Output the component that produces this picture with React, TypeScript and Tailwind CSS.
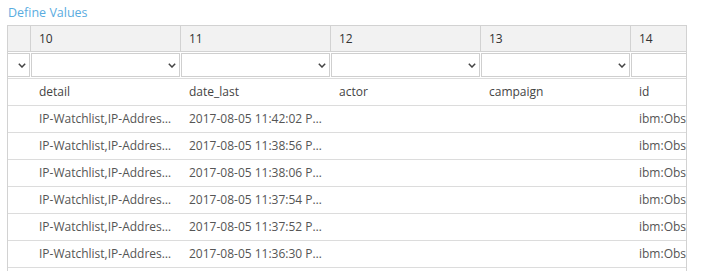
const cols = ["10", "11", "12", "13", "14"];
const names = ["detail", "date_last", "actor", "campaign", "id"];
const times = ["11:42:02", "11:38:56", "11:38:06", "11:37:54", "11:37:52", "11:36:30", "11:35:48"];

function Chevron() {
    return (
        <svg width="8" height="5" viewBox="0 0 8 5" className="absolute right-[3px] top-[9px]">
            <path d="M0.8 0.8 L4 4 L7.2 0.8" fill="none" stroke="#444" strokeWidth="1.5" />
        </svg>
    );
}

export default function App() {
    return (
        <div className="w-[714px] h-[271px] overflow-hidden bg-white font-['Open_Sans',sans-serif] text-[12px]">
            <div className="h-[25px] pt-[5px] pl-[8px] leading-[16px] text-[12.5px] text-[#5aacdf]">Define Values</div>

            <div className="ml-[7px] w-[680px] border-x border-t border-[#d2d2d2] overflow-hidden">
                {/* header numbers */}
                <div className="flex h-[26px] bg-[#f2f2f2] border-b border-[#d2d2d2] text-[#333]">
                    <div className="w-[23px] shrink-0 border-r border-[#d2d2d2]" />
                    {cols.map((c) => (
                        <div key={c} className="w-[150px] shrink-0 border-r border-[#d2d2d2] px-2 flex items-center">
                            {c}
                        </div>
                    ))}
                </div>

                {/* filter row */}
                <div className="flex h-[27px] border-b border-[#dcdcdc]">
                    <div className="w-[23px] shrink-0 pr-[1px] py-[1px]">
                        <div className="relative h-[24px] border border-l-0 border-[#cfcfcf]">
                            <Chevron />
                        </div>
                    </div>
                    {cols.map((c) => (
                        <div key={c} className="w-[150px] shrink-0 pr-[1px] py-[1px]">
                            <div className="relative h-[24px] border border-[#cfcfcf]">
                                <Chevron />
                            </div>
                        </div>
                    ))}
                </div>

                {/* column names */}
                <div className="flex h-[27px] border-b border-[#dcdcdc] text-[#444]">
                    <div className="w-[23px] shrink-0" />
                    {names.map((n) => (
                        <div key={n} className="w-[150px] shrink-0 px-2 flex items-center">
                            {n}
                        </div>
                    ))}
                </div>

                {/* data */}
                {times.map((t) => (
                    <div key={t} className="flex h-[27px] border-b border-[#dcdcdc] text-[#555]">
                        <div className="w-[23px] shrink-0" />
                        <div className="w-[150px] shrink-0 px-2 flex items-center overflow-hidden">
                            <span className="truncate">IP-Watchlist,IP-Address-Match</span>
                        </div>
                        <div className="w-[150px] shrink-0 px-2 flex items-center overflow-hidden">
                            <span className="truncate">2017-08-05 {t} PM (UTC)</span>
                        </div>
                        <div className="w-[150px] shrink-0 px-2" />
                        <div className="w-[150px] shrink-0 px-2" />
                        <div className="w-[150px] shrink-0 px-2 flex items-center overflow-hidden">
                            <span className="truncate">ibm:Observable-0a3f</span>
                        </div>
                    </div>
                ))}
            </div>
        </div>
    );
}
